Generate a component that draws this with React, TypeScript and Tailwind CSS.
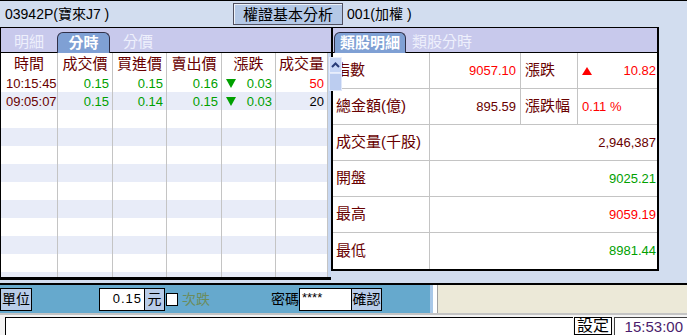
import React from 'react';

const font = "font-['Liberation_Sans','Noto_Sans_CJK_TC',sans-serif]";

interface TickRow {
  time: string;
  price: string;
  bid: string;
  ask: string;
  change: string;
  vol: string;
  volColor: string;
}

const ticks: TickRow[] = [
  { time: '10:15:45', price: '0.15', bid: '0.15', ask: '0.16', change: '0.03', vol: '50', volColor: 'text-[#ff0000]' },
  { time: '09:05:07', price: '0.15', bid: '0.14', ask: '0.15', change: '0.03', vol: '20', volColor: 'text-black' },
];

const DownArrow = () => (
  <svg width="10" height="9" viewBox="0 0 10 9" className="shrink-0">
    <polygon points="0,0 10,0 5,9" fill="#00a000" />
  </svg>
);

const UpArrow = () => (
  <svg width="10" height="8" viewBox="0 0 10 8" className="shrink-0">
    <polygon points="5,0 10,8 0,8" fill="#ff0000" />
  </svg>
);

const cell = 'h-full flex items-center border-r border-[#c4c4c4]';

export default function App() {
  const emptyRows = Array.from({ length: 10 });

  return (
    <div className={`w-[687px] h-[335px] overflow-hidden bg-[#d2ddef] flex flex-col relative ${font}`}>
      {/* top bar */}
      <div className="h-[27px] border-t border-black flex items-center text-[14px] text-black">
        <span className="w-[233px] pl-[5px] whitespace-nowrap">03942P(寶來J7 )</span>
        <button className="w-[110px] h-[22px] bg-[#b4c8e6] border border-[#505060] shadow-[inset_1px_1px_0_#eef2fa] text-[15px] leading-none flex items-center justify-center">
          權證基本分析
        </button>
        <span className="ml-[4px] whitespace-nowrap">001(加權 )</span>
      </div>

      {/* main panels */}
      <div className="h-[256px] flex items-start">
        {/* left panel */}
        <div className="w-[331px] h-[253px] border-l border-t border-b-[3px] border-black flex flex-col bg-[#c8d8f2]">
          <div className="h-[25px] shrink-0 bg-[#c8c9ec] border-b border-black flex items-end text-[15px]">
            <span className="w-[56px] h-[21px] pl-[13px] text-[#eef0fc] leading-[21px]">明細</span>
            <span className="w-[53px] h-[21px] -mb-px bg-[#7fa0d4] border border-b-0 border-[#303048] rounded-t-[6px] text-white font-bold flex items-center justify-center">
              分時
            </span>
            <span className="ml-[13px] h-[21px] text-[#eef0fc] leading-[21px]">分價</span>
          </div>
          <div className="flex flex-1 overflow-hidden">
            <div className="w-[327px] flex flex-col">
              <div className="h-[21px] shrink-0 grid grid-cols-[57px_55px_54px_55px_54px_52px] bg-white text-[15px] text-[#680000]">
                {['時間', '成交價', '買進價', '賣出價', '漲跌', '成交量'].map((h) => (
                  <div key={h} className={`${cell} justify-center`}>{h}</div>
                ))}
              </div>
              {ticks.map((r, i) => (
                <div
                  key={r.time}
                  className={`h-[18px] shrink-0 grid grid-cols-[57px_55px_54px_55px_54px_52px] text-[13px] ${i % 2 ? 'bg-[#e8ecf8]' : 'bg-white'}`}
                >
                  <div className={`${cell} pl-[5px] text-[#680000]`}>{r.time}</div>
                  <div className={`${cell} justify-end pr-[3px] text-[#00a000]`}>{r.price}</div>
                  <div className={`${cell} justify-end pr-[3px] text-[#00a000]`}>{r.bid}</div>
                  <div className={`${cell} justify-end pr-[3px] text-[#00a000]`}>{r.ask}</div>
                  <div className={`${cell} justify-between pl-[4px] pr-[3px] text-[#00a000]`}>
                    <DownArrow />
                    <span>{r.change}</span>
                  </div>
                  <div className={`${cell} justify-end pr-[3px] ${r.volColor}`}>{r.vol}</div>
                </div>
              ))}
              {emptyRows.map((_, i) => (
                <div
                  key={i}
                  className={`h-[18px] shrink-0 grid grid-cols-[57px_55px_54px_55px_54px_52px] ${i % 2 ? 'bg-[#e8ecf8]' : 'bg-white'}`}
                >
                  {Array.from({ length: 6 }).map((__, j) => (
                    <div key={j} className={cell} />
                  ))}
                </div>
              ))}
            </div>
            <div className="w-[3px] bg-[#c8d8f2]" />
          </div>
        </div>

        {/* right panel */}
        <div className="w-[328px] h-[244px] border-l-2 border-r-2 border-t border-b-2 border-black flex flex-col bg-white">
          <div className="h-[25px] shrink-0 bg-[#c8c9ec] border-b border-black flex items-end text-[15px]">
            <span className="ml-[1px] w-[72px] h-[21px] -mb-px bg-[#7fa0d4] border border-b-0 border-[#303048] rounded-t-[6px] text-white font-bold flex items-center justify-center">
              類股明細
            </span>
            <span className="ml-[6px] h-[21px] text-[#eef0fc] leading-[21px]">類股分時</span>
          </div>
          <div className="flex flex-col text-[#680000]">
            <div className="h-[36px] flex border-b border-[#c4c4c4]">
              <div className={`${cell} w-[97px] pl-[2px] text-[15px]`}>指數</div>
              <div className={`${cell} w-[91px] justify-end pr-[4px] text-[13px] text-[#ff0000]`}>9057.10</div>
              <div className={`${cell} w-[57px] pl-[4px] text-[15px]`}>漲跌</div>
              <div className="h-full w-[79px] flex items-center justify-between pl-[4px] pr-[1px] text-[13px] text-[#ff0000]">
                <UpArrow />
                <span>10.82</span>
              </div>
            </div>
            <div className="h-[36px] flex border-b border-[#c4c4c4]">
              <div className={`${cell} w-[97px] pl-[3px] text-[15px]`}>總金額(億)</div>
              <div className={`${cell} w-[91px] justify-end pr-[4px] text-[13px]`}>895.59</div>
              <div className={`${cell} w-[57px] pl-[4px] text-[15px]`}>漲跌幅</div>
              <div className="h-full w-[79px] flex items-center pl-[4px] text-[13px] text-[#ff0000]">0.11 %</div>
            </div>
            {[
              { k: '成交量(千股)', v: '2,946,387', c: 'text-[#680000]' },
              { k: '開盤', v: '9025.21', c: 'text-[#00a000]' },
              { k: '最高', v: '9059.19', c: 'text-[#ff0000]' },
              { k: '最低', v: '8981.44', c: 'text-[#00a000]' },
            ].map((r, i) => (
              <div key={r.k} className={`h-[36px] flex ${i < 3 ? 'border-b border-[#c4c4c4]' : ''}`}>
                <div className={`${cell} w-[97px] pl-[3px] text-[15px]`}>{r.k}</div>
                <div className={`h-full w-[227px] flex items-center justify-end pr-[1px] text-[13px] ${r.c}`}>{r.v}</div>
              </div>
            ))}
          </div>
        </div>
      </div>

      {/* scrollbar of the tick list, drawn over the right panel */}
      <div className="absolute left-[329px] top-[57px] w-[13px] z-10 flex flex-col">
        <div className="h-[16px] bg-[#c6d6f6] border border-[#e8eefc] flex items-center justify-center">
          <svg width="9" height="6" viewBox="0 0 9 6">
            <polyline points="1,5 4.5,1.5 8,5" fill="none" stroke="#283c78" strokeWidth="2" />
          </svg>
        </div>
        <div className="h-[18px] bg-[#bccdf0] border border-[#e0e8fa]" />
      </div>

      {/* separator */}
      <div className="h-[2px] bg-black" />

      {/* order bar */}
      <div className="h-[28px] flex text-[14px]">
        <div className="w-[430px] bg-[#66a9cd] flex items-center">
          <button className="w-[32px] h-[23px] bg-[#b8cce8] border border-black flex items-center justify-center leading-none">單位</button>
          <div className="ml-[67px] w-[46px] h-[23px] bg-white border border-black flex items-center justify-end pr-[2px] text-[13px] tracking-[1px]">0.15</div>
          <button className="w-[20px] h-[23px] bg-[#b8cce8] border border-l-0 border-black flex items-center justify-center leading-none">元</button>
          <div className="ml-[1px] w-[12px] h-[13px] bg-white border border-black" />
          <span className="ml-[4px] w-[89px] text-[#6c8c5c]">次跌</span>
          <span className="w-[28px] text-black">密碼</span>
          <div className="w-[53px] h-[23px] bg-white border border-black flex items-start pl-[2px] text-[13px] leading-[17px]">****</div>
          <button className="w-[30px] h-[23px] bg-[#b8cce8] border border-l-0 border-black flex items-center justify-center leading-none">確認</button>
        </div>
        <div className="w-[3px] bg-[#a8c8e8]" />
        <div className="w-[4px] bg-white" />
        <div className="flex-1 bg-[#ece9d8] border-l border-[#a0a0a0]" />
      </div>

      {/* status bar */}
      <div className="h-[2px] bg-[#c4c4c4]" />
      <div className="h-[20px] flex items-end bg-[#f4f4f4]">
        <div className="w-[5px] h-full" />
        <div className="w-[568px] h-[18px] bg-white border-t border-l border-black" />
        <div className="ml-[1px] w-[38px] h-[18px] bg-white border border-black flex items-center justify-center text-[16px] leading-none">設定</div>
        <div className="ml-[2px] flex-1 h-[18px] bg-white border-t border-l border-[#404040] flex items-center justify-end pr-[4px] text-[15px] text-[#4a1c6c] leading-none">
          15:53:00
        </div>
      </div>
    </div>
  );
}
